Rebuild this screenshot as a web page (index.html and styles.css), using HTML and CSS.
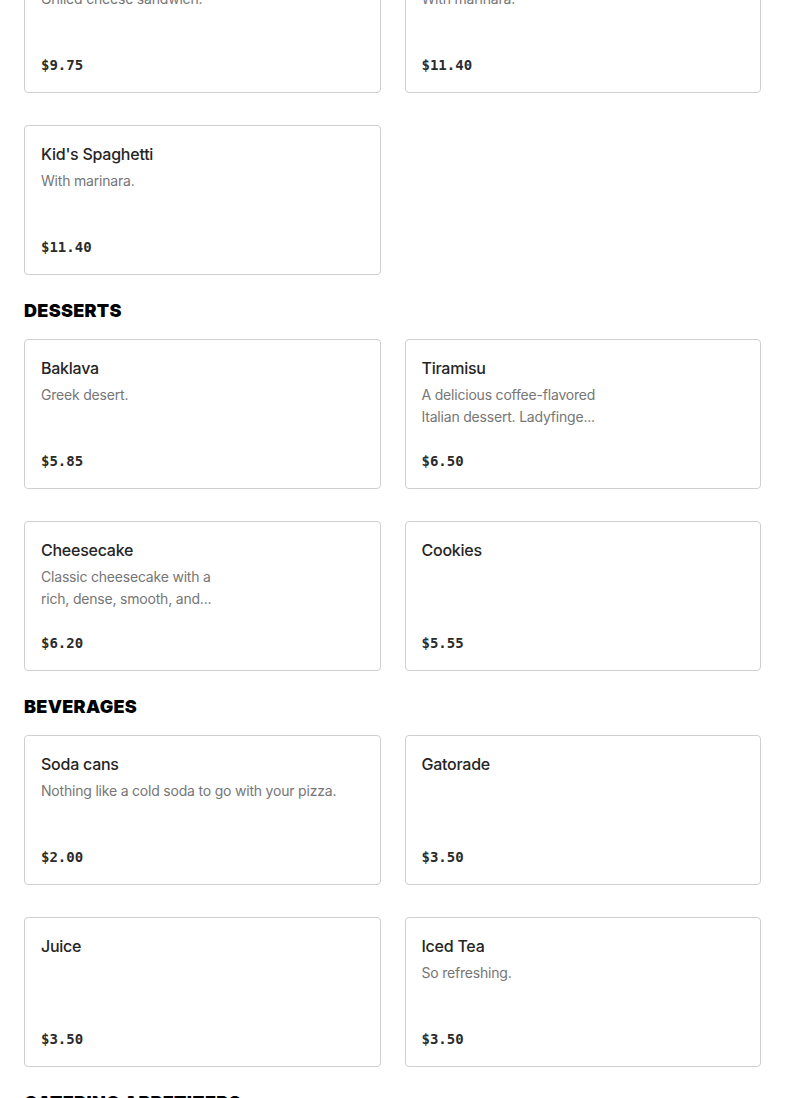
FILE: index.html
```html
<!DOCTYPE html>
<html lang="en">
<head>
<meta charset="utf-8">
<title>Menu</title>
<link rel="stylesheet" href="styles.css">
</head>
<body>
<main class="menu">
  <section class="section section--first">
    <div class="grid">
      <article class="card">
        <h3 class="card-name">Kid's Grilled Cheese</h3>
        <p class="card-desc">Grilled cheese sandwich.</p>
        <p class="card-price">$9.75</p>
      </article>
      <article class="card">
        <h3 class="card-name">Kid's Ravioli</h3>
        <p class="card-desc">With marinara.</p>
        <p class="card-price">$11.40</p>
      </article>
      <article class="card">
        <h3 class="card-name">Kid's Spaghetti</h3>
        <p class="card-desc">With marinara.</p>
        <p class="card-price">$11.40</p>
      </article>
    </div>
  </section>

  <section class="section">
    <h2 class="section-title">DESSERTS</h2>
    <div class="grid">
      <article class="card">
        <h3 class="card-name">Baklava</h3>
        <p class="card-desc">Greek desert.</p>
        <p class="card-price">$5.85</p>
      </article>
      <article class="card">
        <h3 class="card-name">Tiramisu</h3>
        <p class="card-desc card-desc--narrow">A delicious coffee-flavored Italian dessert. Ladyfinge...</p>
        <p class="card-price">$6.50</p>
      </article>
      <article class="card">
        <h3 class="card-name">Cheesecake</h3>
        <p class="card-desc card-desc--narrow">Classic cheesecake with a rich, dense, smooth, and...</p>
        <p class="card-price">$6.20</p>
      </article>
      <article class="card">
        <h3 class="card-name">Cookies</h3>
        <p class="card-desc"></p>
        <p class="card-price">$5.55</p>
      </article>
    </div>
  </section>

  <section class="section">
    <h2 class="section-title">BEVERAGES</h2>
    <div class="grid">
      <article class="card">
        <h3 class="card-name">Soda cans</h3>
        <p class="card-desc">Nothing like a cold soda to go with your pizza.</p>
        <p class="card-price">$2.00</p>
      </article>
      <article class="card">
        <h3 class="card-name">Gatorade</h3>
        <p class="card-desc"></p>
        <p class="card-price">$3.50</p>
      </article>
      <article class="card">
        <h3 class="card-name">Juice</h3>
        <p class="card-desc"></p>
        <p class="card-price">$3.50</p>
      </article>
      <article class="card">
        <h3 class="card-name">Iced Tea</h3>
        <p class="card-desc">So refreshing.</p>
        <p class="card-price">$3.50</p>
      </article>
    </div>
  </section>

  <section class="section">
    <h2 class="section-title">CATERING APPETIZERS</h2>
  </section>
</main>
</body>
</html>
```

FILE: styles.css
```css
* {
  box-sizing: border-box;
}

html, body {
  margin: 0;
  padding: 0;
  background: #ffffff;
}

body {
  font-family: Inter, "Noto Sans", "Liberation Sans", sans-serif;
  color: #2b2b2b;
  overflow: hidden;
}

.menu {
  padding: 0 24px;
  margin-top: -57px;
}

.section {
  margin-bottom: 24px;
}

.section-title {
  margin: 0 0 16px;
  font-family: Inter, "Liberation Sans", sans-serif;
  font-weight: 900;
  font-size: 18px;
  line-height: 24px;
  color: #000000;
  letter-spacing: 0.3px;
}

.grid {
  display: grid;
  grid-template-columns: 1fr 1fr;
  column-gap: 24px;
  row-gap: 32px;
}

.card {
  display: flex;
  flex-direction: column;
  height: 150px;
  padding: 16px 16px 17px;
  border: 1px solid #cfcfcf;
  border-radius: 4px;
  background: #ffffff;
}

.card-name {
  margin: 0;
  font-size: 16px;
  font-weight: 500;
  line-height: 24px;
  letter-spacing: -0.25px;
  color: #252525;
}

.card-desc {
  margin: 4px 0 0;
  font-size: 14px;
  line-height: 22px;
  letter-spacing: -0.2px;
  color: #767676;
  min-height: 44px;
}

.card-desc--narrow {
  max-width: 190px;
}

.card-price {
  margin: auto 0 0;
  font-family: "DejaVu Sans Mono", "Liberation Mono", monospace;
  font-weight: 700;
  font-size: 14px;
  line-height: 20px;
  color: #2b2b2b;
}
```
